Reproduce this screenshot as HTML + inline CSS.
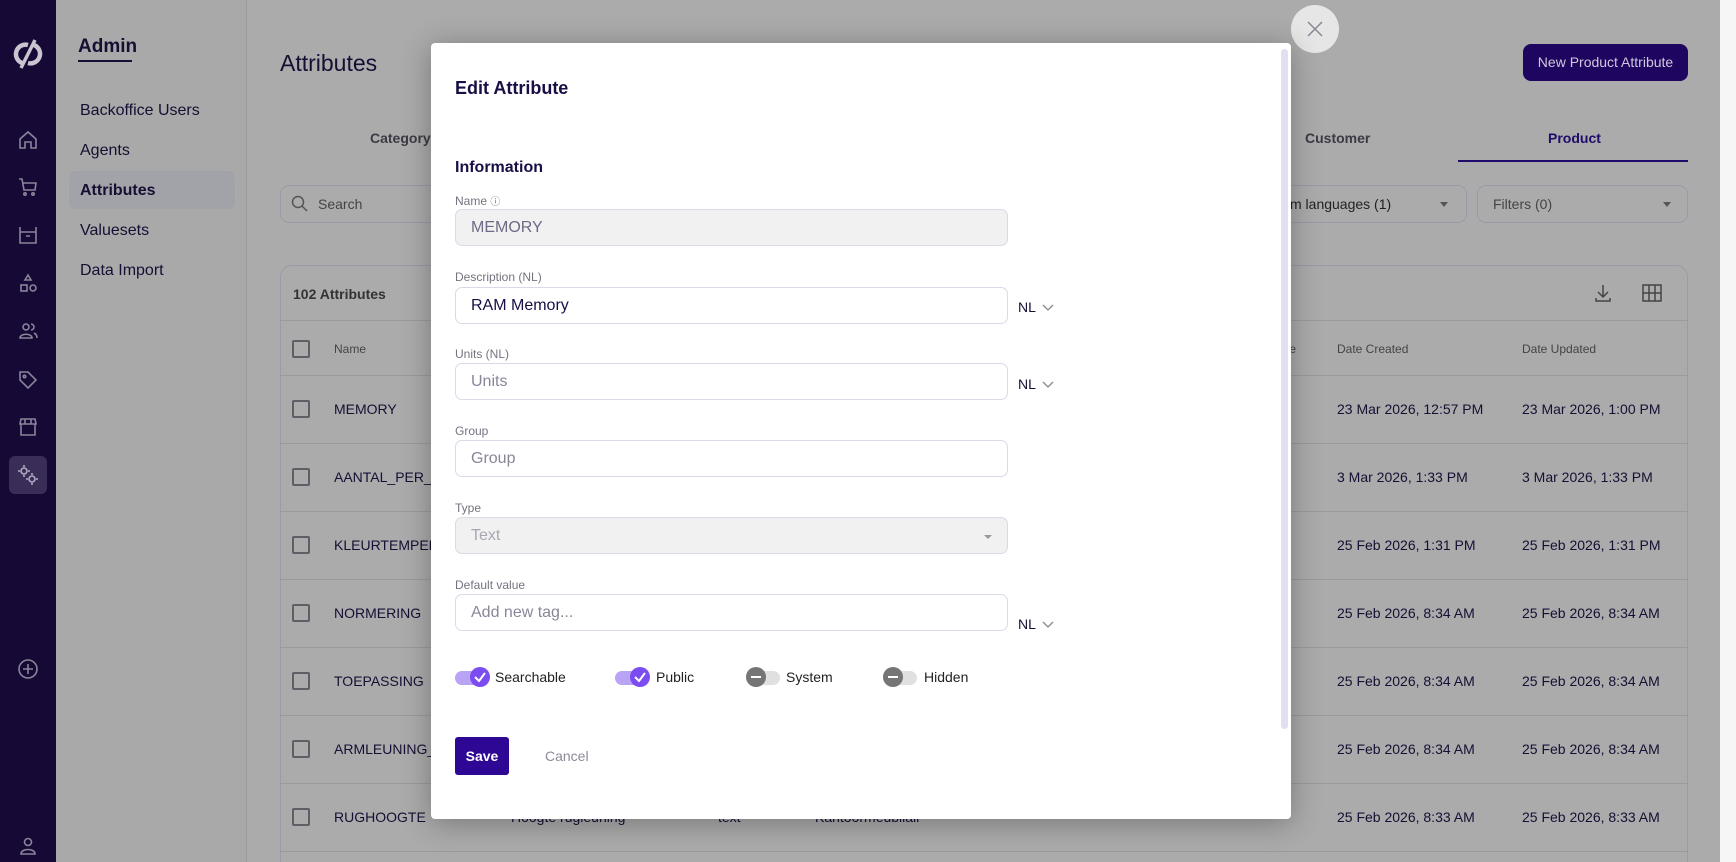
<!DOCTYPE html>
<html style="overflow:hidden;width:1736px;height:862px"><head><meta charset="utf-8"><style>
*{box-sizing:border-box;margin:0;padding:0}
body{width:1736px;height:862px;overflow:hidden;position:relative;background:#ababab;font-family:"Liberation Sans",sans-serif;color:#170e33}
.a{position:absolute;white-space:nowrap}
.side{left:0;top:0;width:56px;height:862px;background:#170935}
.ic{position:absolute;left:16px;width:24px;height:24px}
.adm{left:56px;top:0;width:191px;height:862px;background:#a9a9a9;border-right:1px solid #9a9a9a}
.mi{left:80px;font-size:16px;color:#170e33}
.row{left:280px;width:1408px;height:68px;border-top:1px solid #9b9b9b}
.cb{position:absolute;left:12px;top:24px;width:18px;height:18px;border:2px solid #5e5e66;border-radius:2px}
.rn{position:absolute;left:54px;top:25px;font-size:14px}
.dc{position:absolute;left:1057px;top:25px;font-size:14px}
.du{position:absolute;left:1242px;top:25px;font-size:14px}
.modal{left:431px;top:43px;width:860px;height:776px;background:#fff;border-radius:4px;box-shadow:0 4px 30px rgba(0,0,0,.3)}
.lbl{position:absolute;left:24px;font-size:12px;color:#77727f}
.inp{position:absolute;left:24px;width:553px;height:37px;border:1px solid #dcd8e8;border-radius:7px;font-size:16px;padding:9px 15px;color:#8a8699}
.nl{position:absolute;left:587px;font-size:14px;color:#170e33}
.nl svg{vertical-align:middle;margin-left:6px}
.tg{position:absolute;top:624px;height:20px}
.tr{position:absolute;top:4px;left:0;width:34px;height:14px;border-radius:7px}
.kn{position:absolute;top:0;width:20px;height:20px;border-radius:50%}
.tl{position:absolute;top:2px;font-size:14px;color:#222}
</style></head><body>
<div class="a side">
<svg class="ic" style="top:38px;width:30px;height:32px;left:13px" viewBox="0 0 30 32"><path d="M9 25 A9.5 9.5 0 0 1 15 7" stroke="#c8c4d0" stroke-width="4.5" fill="none"/><path d="M21 7 A9.5 9.5 0 0 1 15 25" stroke="#c8c4d0" stroke-width="4.5" fill="none"/><path d="M22 2 L8 30" stroke="#c8c4d0" stroke-width="3.5"/></svg>
<svg class="ic" style="top:128px" viewBox="0 0 24 24" fill="none" stroke="#8a849a" stroke-width="1.6"><path d="M4 11 L12 4 L20 11 V20 H15 V14 H9 V20 H4Z"/></svg>
<svg class="ic" style="top:175px" viewBox="0 0 24 24" fill="none" stroke="#8a849a" stroke-width="1.6"><path d="M3 4 H6 L8 15 H19 L20 8 H7"/><circle cx="9" cy="19" r="1.2"/><circle cx="17" cy="19" r="1.2"/></svg>
<svg class="ic" style="top:223px" viewBox="0 0 24 24" fill="none" stroke="#8a849a" stroke-width="1.6"><path d="M4 4 V20 H20 V4 M4 9 H20 M10 13 H14"/></svg>
<svg class="ic" style="top:271px" viewBox="0 0 24 24" fill="none" stroke="#8a849a" stroke-width="1.6"><path d="M12 4 L15 9 H9Z"/><rect x="5" y="14" width="6" height="6"/><circle cx="17" cy="17" r="3"/></svg>
<svg class="ic" style="top:319px" viewBox="0 0 24 24" fill="none" stroke="#8a849a" stroke-width="1.6"><circle cx="10" cy="8" r="3"/><path d="M4 19 C4 14 16 14 16 19Z M15 5 A3 3 0 0 1 15 11 M18 14 C20 15 21 17 21 19"/></svg>
<svg class="ic" style="top:368px" viewBox="0 0 24 24" fill="none" stroke="#8a849a" stroke-width="1.6"><path d="M4 4 H12 L20 12 L12 20 L4 12Z"/><circle cx="8.5" cy="8.5" r="1.2"/></svg>
<svg class="ic" style="top:415px" viewBox="0 0 24 24" fill="none" stroke="#8a849a" stroke-width="1.6"><path d="M4 9 L5 4 H19 L20 9 Z M5 9 V20 H19 V9 M9 4 V9 M15 4 V9"/></svg>
<div class="a" style="left:9px;top:456px;width:38px;height:38px;border-radius:6px;background:#3a2d58"></div>
<svg class="ic" style="top:463px" viewBox="0 0 24 24" fill="none" stroke="#b0aac0" stroke-width="1.6"><circle cx="8" cy="8" r="3"/><circle cx="16" cy="16" r="3"/><path d="M8 2v2M8 12v2M2 8h2M12 8h2M16 10v2M16 20v2M10 16h2M20 16h2"/></svg>
<svg class="ic" style="top:657px" viewBox="0 0 24 24" fill="none" stroke="#8a849a" stroke-width="1.6"><circle cx="12" cy="12" r="9"/><path d="M12 7v10M7 12h10"/></svg>
<svg class="ic" style="top:834px" viewBox="0 0 24 24" fill="none" stroke="#8a849a" stroke-width="1.6"><circle cx="12" cy="8" r="3.5"/><path d="M5 20 C5 14 19 14 19 20Z"/></svg>
</div>
<div class="a adm"></div>
<div class="a" style="left:78px;top:36px;font-size:19px;font-weight:bold;color:#170e33">Admin</div>
<div class="a" style="left:78px;top:60px;width:54px;height:2px;background:#170e33"></div>
<div class="a" style="left:69px;top:171px;width:166px;height:38px;border-radius:7px;background:#a1a3a8"></div>
<div class="a mi" style="top:102px">Backoffice Users</div>
<div class="a mi" style="top:142px">Agents</div>
<div class="a mi" style="top:182px;font-weight:bold">Attributes</div>
<div class="a mi" style="top:222px">Valuesets</div>
<div class="a mi" style="top:262px">Data Import</div>

<div class="a" style="left:280px;top:50px;font-size:23px;color:#170e33">Attributes</div>
<div class="a" style="left:1523px;top:44px;width:165px;height:37px;border-radius:8px;background:#1e0560;color:#cfc9dd;font-size:14px;line-height:37px;text-align:center">New Product Attribute</div>
<div class="a" style="left:370px;top:130px;font-size:14px;font-weight:bold;color:#3c3a44">Category</div>
<div class="a" style="left:1305px;top:130px;font-size:14px;font-weight:bold;color:#3c3a44">Customer</div>
<div class="a" style="left:1548px;top:130px;font-size:14px;font-weight:bold;color:#1e0b6a">Product</div>
<div class="a" style="left:1458px;top:160px;width:230px;height:2px;background:#1e0b6a"></div>
<div class="a" style="left:280px;top:185px;width:200px;height:38px;border:1px solid #9d9aa8;border-radius:9px"></div>
<svg class="a" style="left:291px;top:195px" width="18" height="18" viewBox="0 0 18 18" fill="none" stroke="#555" stroke-width="1.5"><circle cx="7" cy="7" r="5.5"/><path d="M11 11 L16 16"/></svg>
<div class="a" style="left:318px;top:196px;font-size:14px;color:#444">Search</div>
<div class="a" style="left:1280px;top:185px;width:187px;height:38px;border:1px solid #9d9aa8;border-radius:9px"></div>
<div class="a" style="left:1290px;top:196px;font-size:14px;color:#222">m languages (1)</div>
<div class="a" style="left:1440px;top:202px;border:4px solid transparent;border-top:5px solid #555"></div>
<div class="a" style="left:1477px;top:185px;width:211px;height:38px;border:1px solid #9d9aa8;border-radius:9px"></div>
<div class="a" style="left:1493px;top:196px;font-size:14px;color:#444">Filters (0)</div>
<div class="a" style="left:1663px;top:202px;border:4px solid transparent;border-top:5px solid #555"></div>

<div class="a" style="left:280px;top:265px;width:1408px;height:597px;border:1px solid #9d9aa8;border-bottom:none;border-radius:12px 12px 0 0"></div>
<div class="a" style="left:293px;top:286px;font-size:14px;font-weight:bold;color:#333">102 Attributes</div>
<svg class="a" style="left:1594px;top:283px" width="18" height="20" viewBox="0 0 18 20" fill="none" stroke="#444" stroke-width="1.5"><path d="M9 2 V13 M4 9 L9 14 L14 9 M2 15 V18 H16 V15"/></svg>
<svg class="a" style="left:1642px;top:284px" width="20" height="18" viewBox="0 0 20 18" fill="none" stroke="#444" stroke-width="1.5"><rect x="1" y="1" width="18" height="16"/><path d="M1 9 H19 M7 1 V17 M13 1 V17"/></svg>
<div class="a row" style="top:320px;height:55px"><div class="cb" style="top:19px"></div><div class="rn" style="top:21px;font-size:12px;color:#444">Name</div><div class="dc" style="top:21px;font-size:12px;color:#444">Date Created</div><div class="du" style="top:21px;font-size:12px;color:#444">Date Updated</div><div style="position:absolute;left:1000px;top:21px;font-size:12px;color:#444">lue</div></div>
<div class="a row" style="top:375px"><div class="cb"></div><div class="rn">MEMORY</div><div class="dc">23 Mar 2026, 12:57 PM</div><div class="du">23 Mar 2026, 1:00 PM</div></div>
<div class="a row" style="top:443px"><div class="cb"></div><div class="rn">AANTAL_PER_V</div><div class="dc">3 Mar 2026, 1:33 PM</div><div class="du">3 Mar 2026, 1:33 PM</div></div>
<div class="a row" style="top:511px"><div class="cb"></div><div class="rn">KLEURTEMPER</div><div class="dc">25 Feb 2026, 1:31 PM</div><div class="du">25 Feb 2026, 1:31 PM</div></div>
<div class="a row" style="top:579px"><div class="cb"></div><div class="rn">NORMERING</div><div class="dc">25 Feb 2026, 8:34 AM</div><div class="du">25 Feb 2026, 8:34 AM</div></div>
<div class="a row" style="top:647px"><div class="cb"></div><div class="rn">TOEPASSING</div><div class="dc">25 Feb 2026, 8:34 AM</div><div class="du">25 Feb 2026, 8:34 AM</div></div>
<div class="a row" style="top:715px"><div class="cb"></div><div class="rn">ARMLEUNING_</div><div class="dc">25 Feb 2026, 8:34 AM</div><div class="du">25 Feb 2026, 8:34 AM</div></div>
<div class="a row" style="top:783px"><div class="cb"></div><div class="rn">RUGHOOGTE</div><div class="rn" style="left:231px">Hoogte rugleuning</div><div class="rn" style="left:438px">text</div><div class="rn" style="left:535px">Kantoormeubilair</div><div class="dc">25 Feb 2026, 8:33 AM</div><div class="du">25 Feb 2026, 8:33 AM</div></div>
<div class="a" style="left:280px;top:851px;width:1408px;border-top:1px solid #9b9b9b"></div>
<div class="a" style="left:1720px;top:0;width:16px;height:862px;background:#f6f6f6"></div>

<div class="a" style="left:1291px;top:5px;width:48px;height:48px;border-radius:50%;background:#e6e6e6"></div>
<svg class="a" style="left:1306px;top:20px" width="18" height="18" viewBox="0 0 18 18" stroke="#8a8696" stroke-width="1.5"><path d="M2 2 L16 16 M16 2 L2 16"/></svg>

<div class="a modal">
<div style="position:absolute;right:3px;top:6px;width:7px;height:680px;border-radius:4px;background:#e3def0"></div>
<div class="a" style="left:24px;top:35px;font-size:18px;font-weight:bold;color:#1a0e45">Edit Attribute</div>
<div class="a" style="left:24px;top:116px;font-size:16px;font-weight:bold;color:#1a0e45">Information</div>
<div class="lbl" style="top:150px">Name <span style="font-size:10px">ⓘ</span></div>
<div class="inp" style="top:166px;background:#f1f1f1;color:#6e6a86">MEMORY</div>
<div class="lbl" style="top:227px">Description (NL)</div>
<div class="inp" style="top:244px;color:#1a0e45">RAM Memory</div>
<div class="nl" style="top:256px">NL<svg width="12" height="8" viewBox="0 0 12 8" fill="none" stroke="#888" stroke-width="1.3"><path d="M1 1 L6 6 L11 1"/></svg></div>
<div class="lbl" style="top:304px">Units (NL)</div>
<div class="inp" style="top:320px">Units</div>
<div class="nl" style="top:333px">NL<svg width="12" height="8" viewBox="0 0 12 8" fill="none" stroke="#888" stroke-width="1.3"><path d="M1 1 L6 6 L11 1"/></svg></div>
<div class="lbl" style="top:381px">Group</div>
<div class="inp" style="top:397px">Group</div>
<div class="lbl" style="top:458px">Type</div>
<div class="inp" style="top:474px;background:#f1f1f1;color:#a9a6b4">Text</div>
<div class="a" style="left:553px;top:492px;border:4px solid transparent;border-top:4px solid #999"></div>
<div class="lbl" style="top:535px">Default value</div>
<div class="inp" style="top:551px">Add new tag...</div>
<div class="nl" style="top:573px">NL<svg width="12" height="8" viewBox="0 0 12 8" fill="none" stroke="#888" stroke-width="1.3"><path d="M1 1 L6 6 L11 1"/></svg></div>

<div class="tg" style="left:24px"><div class="tr" style="background:#b8a3f5"></div><div class="kn" style="left:15px;background:#7b4cf0"><svg width="20" height="20" viewBox="0 0 20 20" fill="none" stroke="#fff" stroke-width="2"><path d="M5 10 L9 14 L15 6"/></svg></div><div class="tl" style="left:40px">Searchable</div></div>
<div class="tg" style="left:184px"><div class="tr" style="background:#b8a3f5"></div><div class="kn" style="left:15px;background:#7b4cf0"><svg width="20" height="20" viewBox="0 0 20 20" fill="none" stroke="#fff" stroke-width="2"><path d="M5 10 L9 14 L15 6"/></svg></div><div class="tl" style="left:41px">Public</div></div>
<div class="tg" style="left:315px"><div class="tr" style="background:#e0e0e0"></div><div class="kn" style="left:0;background:#757575"><div style="position:absolute;left:5px;top:9px;width:10px;height:2px;background:#fff"></div></div><div class="tl" style="left:40px">System</div></div>
<div class="tg" style="left:452px"><div class="tr" style="background:#e0e0e0"></div><div class="kn" style="left:0;background:#757575"><div style="position:absolute;left:5px;top:9px;width:10px;height:2px;background:#fff"></div></div><div class="tl" style="left:41px">Hidden</div></div>

<div class="a" style="left:24px;top:694px;width:54px;height:38px;border-radius:3px;background:#2e0794;color:#fff;font-size:14px;font-weight:bold;line-height:38px;text-align:center">Save</div>
<div class="a" style="left:114px;top:705px;font-size:14px;color:#8d8a99">Cancel</div>
</div>
</body></html>
